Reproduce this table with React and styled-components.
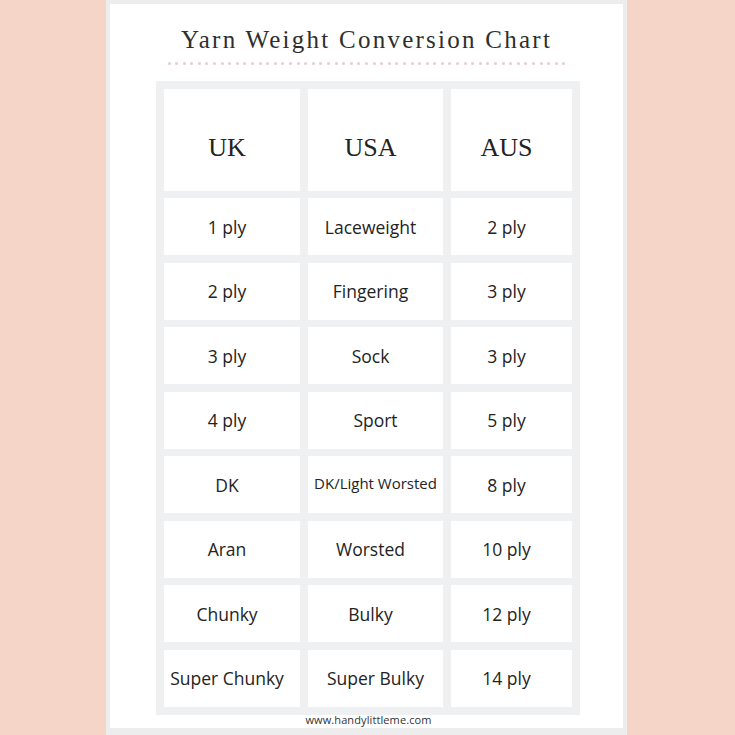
import React from "react";
import styled, { createGlobalStyle } from "styled-components";

const Global = createGlobalStyle`
  html, body { margin: 0; padding: 0; }
  body { background: #f4d5c8; font-family: "Open Sans", "Liberation Sans", sans-serif; }
`;

const Page = styled.div`
  width: 735px;
  height: 735px;
  background: #f4d5c8;
  display: flex;
  justify-content: center;
  box-sizing: border-box;
  overflow: hidden;
`;

const Paper = styled.div`
  width: 521px;
  height: 735px;
  margin-left: -2px;
  box-sizing: border-box;
  background: #ffffff;
  border: 4px solid #ededed;
  border-bottom-width: 7px;
  display: flex;
  flex-direction: column;
  align-items: center;
  padding-top: 21px;
`;

const Title = styled.h1`
  margin: 0;
  font-family: "Liberation Serif", "DejaVu Serif", serif;
  font-weight: 400;
  font-size: 25px;
  letter-spacing: 2.25px;
  color: #2e2e2e;
  line-height: 30px;
`;

const Dots = styled.div`
  width: 398px;
  margin-top: 7px;
  display: flex;
  justify-content: space-between;
`;

const Dot = styled.span`
  width: 3px;
  height: 3px;
  border-radius: 50%;
  background: #ecc9cc;
`;

const Table = styled.div`
  margin-top: 16px;
  margin-left: 3px;
  width: 424px;
  box-sizing: border-box;
  background: #eef0f2;
  padding: 8px;
  display: grid;
  grid-template-columns: 136px 135px 121px;
  grid-template-rows: 102px repeat(8, 57.3px);
  column-gap: 8px;
  row-gap: 7.2px;
`;

const Cell = styled.div`
  background: #ffffff;
  display: flex;
  align-items: center;
  justify-content: center;
  color: #232323;
  font-family: ${(p) =>
    p.$head ? '"Liberation Serif", "DejaVu Serif", serif' : '"Open Sans", "Liberation Sans", sans-serif'};
  font-size: ${(p) => (p.$head ? "26px" : p.$small ? "15px" : "17.5px")};
  white-space: nowrap;
  padding-top: ${(p) => (p.$head ? "16px" : "0")};
  padding-bottom: ${(p) => (p.$small ? "4px" : "0")};
  padding-right: ${(p) => (p.$centered ? "0" : "10px")};
`;

const Footer = styled.div`
  margin-top: -3px;
  font-size: 11px;
  color: #333;
  font-family: "Open Sans", "Liberation Sans", sans-serif;
  letter-spacing: 0.1px;
  margin-left: 4px;
`;

const rows = [
  ["1 ply", "Laceweight", "2 ply"],
  ["2 ply", "Fingering", "3 ply"],
  ["3 ply", "Sock", "3 ply"],
  ["4 ply", "Sport*", "5 ply"],
  ["DK", "DK/Light Worsted*", "8 ply"],
  ["Aran", "Worsted", "10 ply"],
  ["Chunky", "Bulky", "12 ply"],
  ["Super Chunky", "Super Bulky*", "14 ply"],
];

export default function App() {
  return (
    <>
      <Global />
      <Page>
        <Paper>
          <Title>Yarn Weight Conversion Chart</Title>
          <Dots>
            {Array.from({ length: 53 }, (_, i) => (
              <Dot key={i} />
            ))}
          </Dots>
          <Table>
            <Cell $head>UK</Cell>
            <Cell $head>USA</Cell>
            <Cell $head>AUS</Cell>
            {rows.map((r, i) =>
              r.map((raw, j) => {
                const centered = raw.endsWith("*");
                const t = centered ? raw.slice(0, -1) : raw;
                return (
                  <Cell key={i + "-" + j} $small={t.length > 12} $centered={centered}>
                    {t}
                  </Cell>
                );
              })
            )}
          </Table>
          <Footer>www.handylittleme.com</Footer>
        </Paper>
      </Page>
    </>
  );
}
